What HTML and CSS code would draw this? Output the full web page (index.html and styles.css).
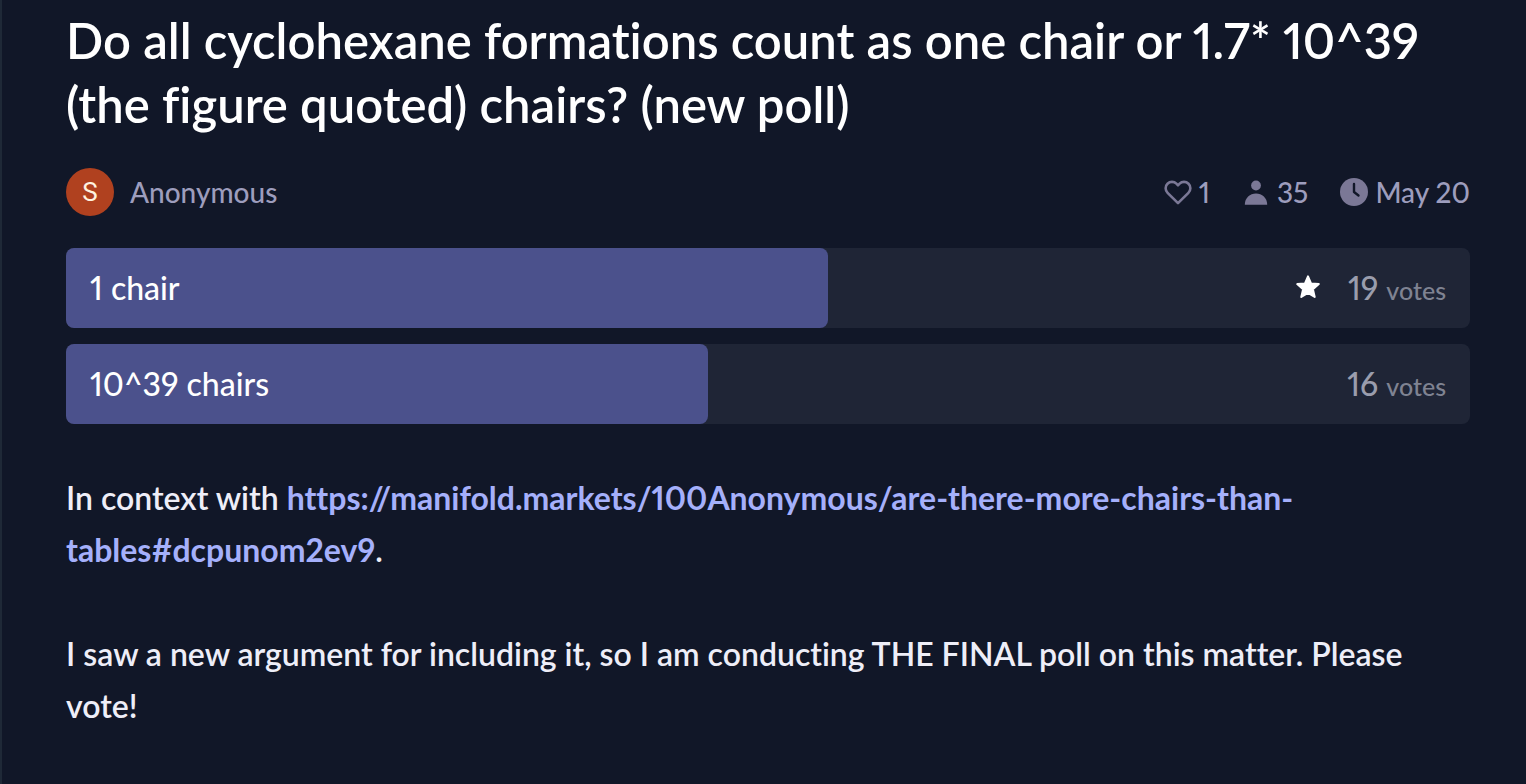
FILE: index.html
```html
<!DOCTYPE html>
<html lang="en">
<head>
    <meta charset="UTF-8">
    <meta name="viewport" content="width=device-width, initial-scale=1.0">
    <title>Do all cyclohexane formations count as one chair?</title>
    <link rel="stylesheet" href="styles.css">
</head>
<body>
    <main class="container">
        <h1 class="title">Do all cyclohexane formations count as one chair or 1.7* 10^39 (the figure quoted) chairs? (new poll)</h1>

        <div class="meta">
            <a class="author" href="#">
                <span class="avatar">S</span>
                <span>Anonymous</span>
            </a>
            <div class="stats">
                <button class="stat like" type="button" aria-label="Like">
                    <svg class="icon" viewBox="0 0 28 28" fill="none" stroke="currentColor" stroke-width="2.6" stroke-linejoin="round">
                        <path d="M14 25.200 L3.600 14.800 C1 12.200 1 8.100 3.500 5.700 C6 3.300 10 3.300 12.400 5.700 L14 7.300 L15.600 5.700 C18 3.300 22 3.300 24.500 5.700 C27 8.100 27 12.200 24.400 14.800 Z"/>
                    </svg>
                    <span>1</span>
                </button>
                <div class="stat">
                    <svg class="icon" viewBox="0 0 28 28" fill="currentColor">
                        <circle cx="14" cy="7.500" r="4.900"/>
                        <path d="M2.800 26.700 C2.800 20 8 15.600 14 15.600 C20 15.600 25.200 20 25.200 26.700 Z"/>
                    </svg>
                    <span>35</span>
                </div>
                <div class="stat">
                    <svg class="icon" viewBox="0 0 28 28">
                        <circle cx="14" cy="14" r="14" fill="currentColor"/>
                        <path d="M14 6 V14 L18.500 17.500" fill="none" stroke="#111728" stroke-width="2.400" stroke-linecap="round" stroke-linejoin="round"/>
                    </svg>
                    <span>May 20</span>
                </div>
            </div>
        </div>

        <ul class="poll">
            <li class="option">
                <div class="fill" style="width: 54.28%"></div>
                <span class="label">1 chair</span>
                <svg class="star" viewBox="0 0 24 24" fill="currentColor" stroke="currentColor" stroke-width="2" stroke-linejoin="round">
                    <path d="M12 1.300 L15 8.500 L22.800 9.100 L16.900 14.300 L18.700 22 L12 17.900 L5.300 22 L7.100 14.300 L1.200 9.100 L9 8.500 Z"/>
                </svg>
                <span class="count">19 <small>votes</small></span>
            </li>
            <li class="option">
                <div class="fill" style="width: 45.72%"></div>
                <span class="label">10^39 chairs</span>
                <span class="count">16 <small>votes</small></span>
            </li>
        </ul>

        <div class="description">
            <p>In context with <a href="https://manifold.markets/100Anonymous/are-there-more-chairs-than-tables#dcpunom2ev9">https://manifold.markets/100Anonymous/are-there-more-chairs-than-tables#dcpunom2ev9</a>.</p>
            <p>I saw a new argument for including it, so I am conducting THE FINAL poll on this matter. Please vote!</p>
        </div>
    </main>
</body>
</html>
```
FILE: styles.css
```css
* {
    box-sizing: border-box;
}
body {
    margin: 0;
    min-height: 100vh;
    background: #111728;
    color: #eeeef8;
    border-left: 2px solid #1f2937;
    font-family: Lato, sans-serif;
    font-size: 32px;
    font-weight: 500;
    font-variant-ligatures: none;
    font-variant-numeric: proportional-nums;
}
.container {
    padding: 8px 56px 52px 64px;
}
.title {
    margin: 0 0 32px;
    color: white;
    font-size: 49px;
    font-weight: 600;
    line-height: 64px;
}
.meta {
    display: flex;
    justify-content: space-between;
    align-items: center;
    margin-bottom: 32px;
    color: #9d9dbd;
    font-size: 28px;
    line-height: 40px;
}
.author {
    display: flex;
    align-items: center;
    gap: 16px;
    color: inherit;
    text-decoration: none;
}
.avatar {
    width: 48px;
    height: 48px;
    border-radius: 50%;
    background: #b0411f;
    color: #fff3e0;
    font-family: Roboto, sans-serif;
    font-size: 26px;
    font-weight: 400;
    line-height: 48px;
    text-align: center;
}
.stats {
    display: flex;
    align-items: center;
    gap: 32px;
}
.stat {
    display: flex;
    align-items: center;
    gap: 7px;
}
.like {
    padding: 0;
    border: none;
    background: none;
    color: inherit;
    font: inherit;
    cursor: pointer;
}
.icon {
    width: 28px;
    height: 28px;
    color: #7b7896;
}
.poll {
    display: flex;
    flex-direction: column;
    gap: 16px;
    margin: 0 0 48px;
    padding: 0;
    list-style: none;
}
.option {
    position: relative;
    display: flex;
    align-items: center;
    height: 80px;
    padding: 0 24px 2px;
    border-radius: 8px;
    background: #1f2536;
    color: white;
}
.fill {
    position: absolute;
    top: 0;
    bottom: 0;
    left: 0;
    border-radius: 8px;
    background: #4b518c;
}
.label {
    position: relative;
    flex: 1;
}
.star {
    width: 24px;
    height: 24px;
    margin-right: 28px;
    overflow: visible;
}
.count {
    color: #9a9dad;
}
.count small {
    color: #7f8392;
    font-size: 25px;
}
.description {
    font-weight: 600;
    line-height: 52px;
}
.description p {
    margin: 0 0 52px;
}
.description p:last-child {
    margin: 0;
}
.description a {
    color: #a5b0fb;
    font-weight: 700;
    text-decoration: none;
}
```
